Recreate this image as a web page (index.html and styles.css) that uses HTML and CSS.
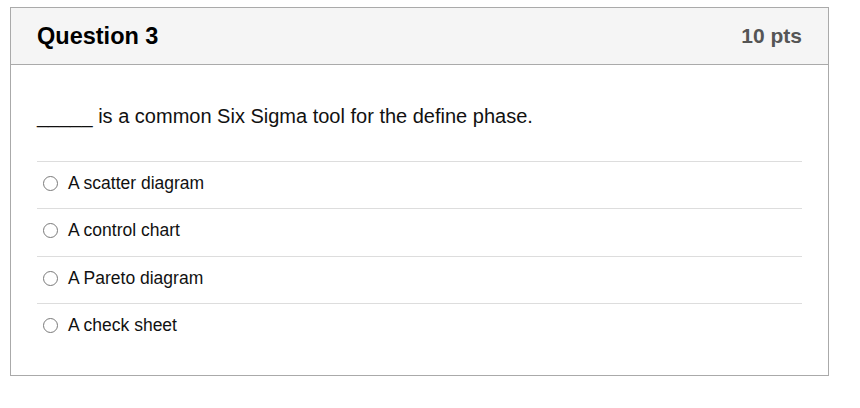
FILE: index.html
```html
<!DOCTYPE html>
<html lang="en">
<head>
<meta charset="utf-8">
<title>Question 3</title>
<link rel="stylesheet" href="styles.css">
</head>
<body>
<div class="question">
  <div class="header">
    <span class="title">Question 3</span>
    <span class="points">10 pts</span>
  </div>
  <div class="content">
    <p class="text">_____ is a common Six Sigma tool for the define phase.</p>
    <div class="answers">
      <label class="answer"><span class="radio"></span><span class="label">A scatter diagram</span></label>
      <label class="answer"><span class="radio"></span><span class="label">A control chart</span></label>
      <label class="answer"><span class="radio"></span><span class="label">A Pareto diagram</span></label>
      <label class="answer"><span class="radio"></span><span class="label">A check sheet</span></label>
    </div>
  </div>
</div>
</body>
</html>
```
FILE: styles.css
```css
html, body {
  margin: 0;
  padding: 0;
  background: #ffffff;
}
body {
  padding: 7px 0 0 10px;
  font-family: "Liberation Sans", Arial, sans-serif;
  color: #111;
}
.question {
  width: 817px;
  height: 367px;
  border: 1px solid #aaaaaa;
  display: flex;
  flex-direction: column;
}
.header {
  height: 56px;
  background: #f5f5f5;
  border-bottom: 1px solid #aaaaaa;
  display: flex;
  align-items: center;
  justify-content: space-between;
  padding: 0 26px 0 26px;
  flex-shrink: 0;
}
.title {
  font-size: 23.5px;
  font-weight: bold;
  color: #000;
}
.points {
  font-size: 21px;
  font-weight: bold;
  color: #555;
}
.content {
  padding: 0 26px 0 26px;
}
.text {
  margin: 0;
  padding: 39px 0 0 0;
  height: 57px;
  font-size: 20px;
  line-height: 24px;
  color: #111;
}
.answers {
  display: flex;
  flex-direction: column;
}
.answer {
  display: flex;
  align-items: flex-start;
  box-sizing: border-box;
  height: 47.34px;
  border-top: 1px solid #dddddd;
  padding: 10px 0 0 6px;
  font-size: 17.5px;
  line-height: 22px;
  color: #111;
}
.radio {
  width: 13px;
  height: 13px;
  border: 1px solid #7a7a7a;
  border-radius: 50%;
  margin: 4px 10px 0 0;
  box-sizing: content-box;
  background: #fff;
  flex-shrink: 0;
}
```
